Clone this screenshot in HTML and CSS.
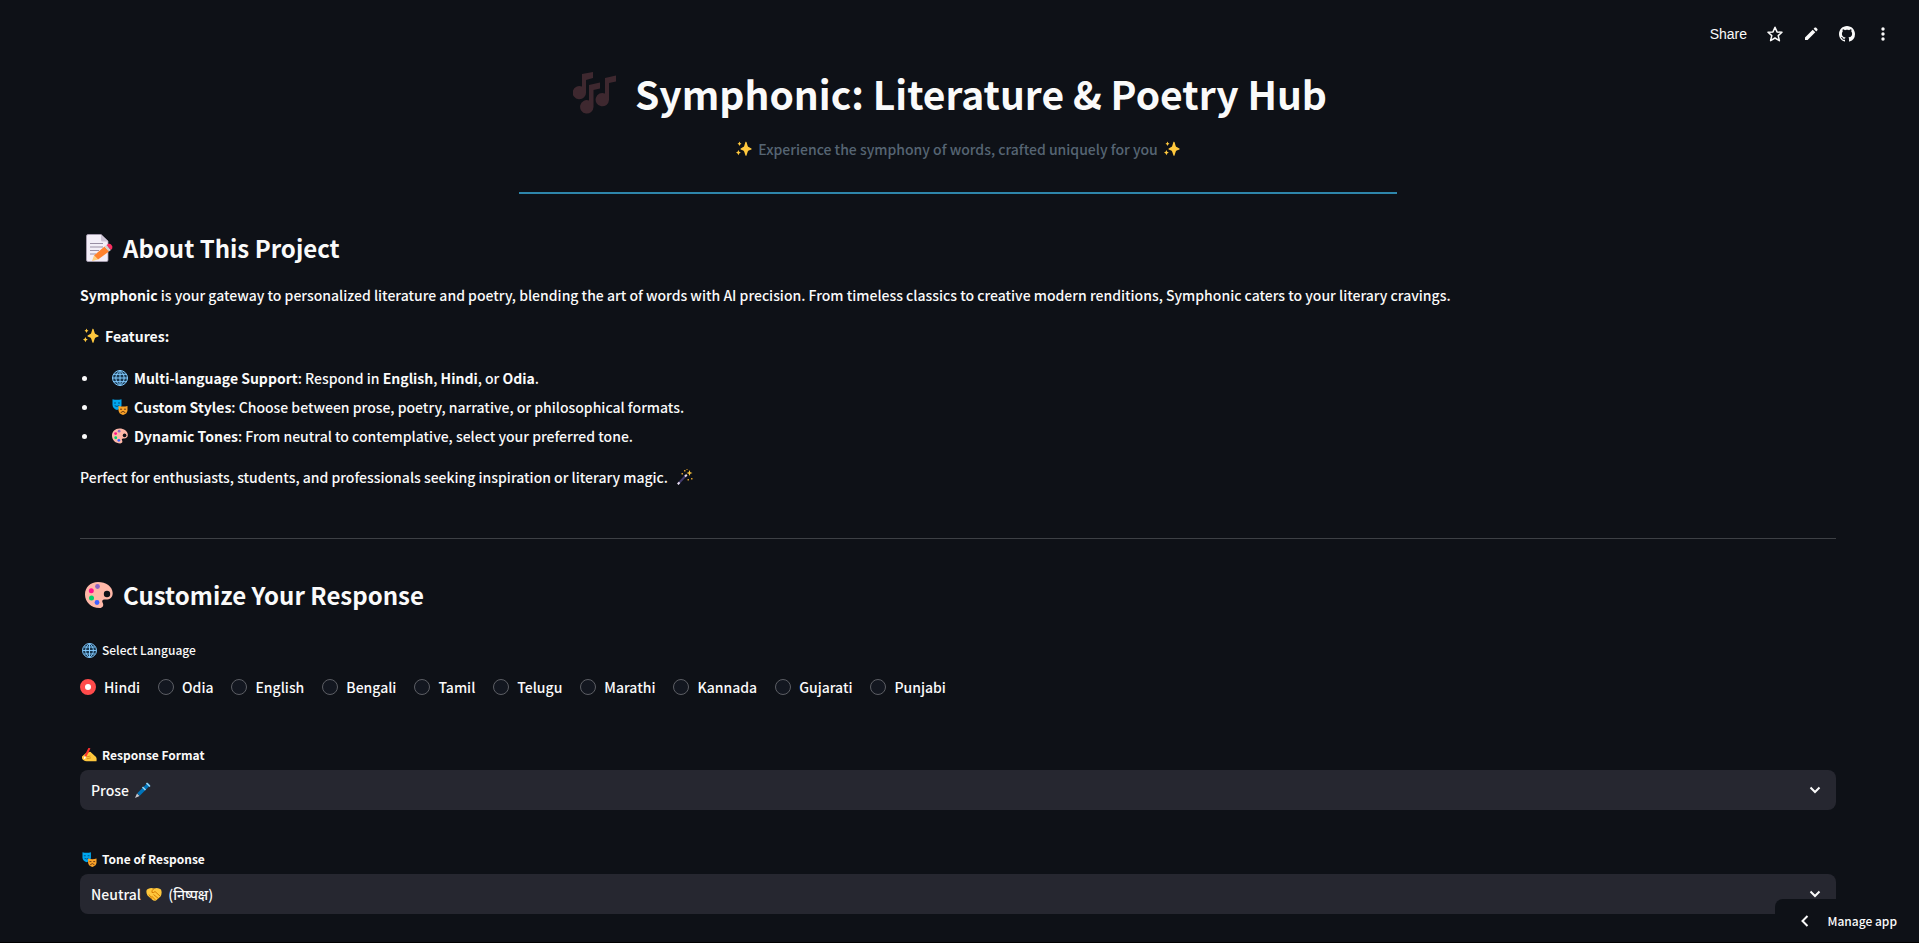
FILE: index.html
```html
<!DOCTYPE html>
<html lang="en">
<head>
	<meta charset="UTF-8">
	<meta name="viewport" content="width=device-width, initial-scale=1">
	<title>Symphonic</title>
	<link rel="stylesheet" href="styles.css">
</head>
<body>
<!-- shared icons -->
<svg class="sprite" aria-hidden="true">
	<symbol id="i-sparkles" viewBox="0 0 16 16">
		<path fill="#ffc83d" d="M9.500 .8 Q10 .4 10.500 1 L11.700 5 Q12 5.800 12.700 6.100 L15.400 7.400 Q16 8 15.400 8.500 L12.700 9.600 Q12 10 11.700 10.700 L10.500 14.600 Q10 15.200 9.500 14.600 L8.200 10.700 Q7.900 10 7.200 9.600 L4.700 8.500 Q4.100 8 4.700 7.400 L7.200 6.100 Q7.900 5.800 8.200 5 Z"/>
		<path fill="#ffc83d" d="M3.500 .6 L4.200 2.100 L5.500 2.800 L4.200 3.500 L3.500 5 L2.800 3.500 L1.500 2.800 L2.800 2.100Z M2.400 9 L3.200 10.800 L4.800 11.600 L3.200 12.400 L2.400 14.200 L1.600 12.400 L0 11.600 L1.600 10.800Z"/>
	</symbol>
	<symbol id="i-globe" viewBox="0 0 16 16">
		<circle cx="8" cy="8" r="7.500" fill="#17364f" stroke="#83cbff"/>
		<path fill="none" stroke="#83cbff" d="M8 .5V15.500M.5 8H15.500M2 4.300H14M2 11.700H14M8 .5C2.500 4.500 2.500 11.500 8 15.500M8 .5C13.500 4.500 13.500 11.500 8 15.500"/>
	</symbol>
	<symbol id="i-masks" viewBox="0 0 16 16">
		<path fill="#00a6ed" d="M.5 .2Q5 1.400 9.500 .2V6.500Q9 10 5 11Q.8 9.500 .5 6Z"/>
		<path fill="none" stroke="#004f82" d="M2 4h2M6 4h2M2.700 6.700Q5 8.300 7.200 6.500"/>
		<path fill="#f9a228" d="M6.500 7Q11 8.200 15.500 7V11.500Q15 15 11 16Q7 15 6.500 11.500Z"/>
		<path fill="none" stroke="#6d3b13" d="M8 10.200h2M12 10.200h2M8.700 13.700Q11 11 13.300 13.700"/>
	</symbol>
	<symbol id="i-palette" viewBox="0 0 28 28">
		<path fill="#ffb8a8" d="M13 1C21 1 27.500 5.500 27.700 12C27.800 17 24 19 20 18.500C17.500 18.200 16.500 20 17.800 22C19 24.500 17.800 27 14.500 27C6 27 0 21 0 13.500C0 6 5.500 1 13 1Z"/>
		<circle cx="22" cy="13" r="3.200" fill="#0e1117"/>
		<circle cx="12.500" cy="5.500" r="2.400" fill="#8d65c5"/>
		<circle cx="6.300" cy="9.800" r="2.500" fill="#ff118b"/>
		<circle cx="6.500" cy="17" r="2.500" fill="#00d26a"/>
		<circle cx="12" cy="21.500" r="2.400" fill="#3f5fff"/>
	</symbol>
	<symbol id="i-memo" viewBox="0 0 28 28">
		<path fill="#f3eef8" stroke="#a99fb5" stroke-width=".8" d="M3 .5H16L23 7V26Q23 27.500 21.500 27.500H3Q1.500 27.500 1.500 26V2Q1.500 .5 3 .5Z"/>
		<path fill="#cdc4d6" d="M16 .5L23 7.500H17.500Q16 7.500 16 6Z"/>
		<path stroke="#998ea4" d="M5 9.500H18M5 13H18M5 16.500H14M5 20H11"/>
		<path fill="#ff822d" d="M19.500 12.500L24 17.500L13 25.500L9 21.500Z"/>
		<path fill="#ffce7c" d="M9 21.500L13 25.500L7 27Z"/>
		<path fill="#d3d3d3" d="M19.500 12.500L21.500 11L26 16L24 17.500Z"/>
		<path fill="#f92f60" d="M21.500 11L23.500 9.800Q25 9.200 26.500 11L27.300 12.500Q28 14 26 16Z"/>
	</symbol>
	<symbol id="i-notes" viewBox="0 0 44 42">
		<path d="M9 2L20 0V6L13 8V20A6.700 6.700 0 1 1 9 14.500Z M16 13L27 10.500V16.500L20.500 18V35A6.700 6.700 0 1 1 16 28.500Z M32 6L43 3.500V9.500L36 11V28A6.700 6.700 0 1 1 32 21.500Z"/>
	</symbol>
	<symbol id="i-wand" viewBox="0 0 16 16">
		<path stroke="#433b6b" stroke-width="2" d="M1 15L9 6.500"/>
		<path stroke="#e6dcee" stroke-width="2" d="M.8 15.200L2.500 13.400M8 7.500L9.800 5.700"/>
		<path fill="#ffc83d" d="M12.500 1L13.300 3.200L15.500 4L13.300 4.800L12.500 7L11.700 4.800L9.500 4L11.700 3.200Z"/>
		<path fill="#d89c2a" d="M7 1h1.500v1.500H7zM4.500 4H6v1.500H4.500zM14 9h1.500v1.500H14zM10.500 10H12v1.500h-1.500zM9.500 0h1v1h-1z"/>
	</symbol>
	<symbol id="i-writing" viewBox="0 0 16 16">
		<path fill="#ffc83d" d="M0 9L4 5.500L7 4.500Q9 3.500 10 5L15 9.500Q16 11 15.500 14H5Q1 14 0 11Z"/>
		<path fill="none" stroke="#d68a18" d="M5 9.500L9 8.500M5 11.500L9.500 10.500"/>
		<path stroke="#f8312f" stroke-width="2.200" d="M8 0L3.500 9"/>
		<path stroke="#fff" stroke-width="1.500" d="M3.500 9L2.500 11.500"/>
	</symbol>
	<symbol id="i-pen" viewBox="0 0 16 16">
		<path stroke="#0074ba" stroke-width="3.500" d="M3.500 12.500L14 2"/>
		<path stroke="#9bd7f5" stroke-width="1.500" d="M11.500 1L15 4.500M7.500 5L10.500 8"/>
		<path fill="#c8c8d0" d="M2 11.500L4.500 14L0 16Z"/>
	</symbol>
	<symbol id="i-handshake" viewBox="0 0 16 16">
		<path fill="#ffc83d" d="M1 3.500Q4 1 8 2.500Q12 1 15 3.500Q16.500 7 14.500 10.500L10 14.500Q8 15.500 6 13.500L1.500 9.500Q-.5 6 1 3.500Z"/>
		<path fill="none" stroke="#d67d00" d="M8 2.500Q5 5 6 6.500Q8 7 9 5.500L14 10M7.500 8.500L12 12.200M5.500 10L9.500 14M3 8.500L6 13"/>
	</symbol>
	<symbol id="i-chevron" viewBox="0 0 12 8">
		<path fill="none" stroke="currentColor" stroke-width="2" d="M1.500 1.500L6 6L10.500 1.500"/>
	</symbol>
</svg>

<header class="toolbar">
	<button type="button">Share</button>
	<button type="button" aria-label="Favorite">
		<svg viewBox="0 0 16 16"><path fill="none" stroke="currentColor" stroke-width="1.500" stroke-linejoin="round" d="M8 1.200L10 5.900L15 6.300L11.200 9.600L12.400 14.700L8 12L3.600 14.700L4.800 9.600L1 6.300L6 5.900Z"/></svg>
	</button>
	<button type="button" aria-label="Edit">
		<svg viewBox="0 0 16 16"><path fill="currentColor" d="M2 11.400L9.700 3.700L12.300 6.300L4.600 14H2ZM10.600 2.800L11.800 1.600Q12.400 1.200 13 1.600L14.400 3Q14.800 3.600 14.400 4.200L13.200 5.400Z"/></svg>
	</button>
	<button type="button" aria-label="View source">
		<svg viewBox="0 0 16 16"><path fill="currentColor" d="M8 0C3.580 0 0 3.580 0 8c0 3.540 2.290 6.530 5.470 7.590.4.070.55-.17.55-.38 0-.19-.01-.82-.01-1.490-2.010.37-2.530-.49-2.690-.94-.09-.23-.48-.94-.82-1.130-.28-.15-.68-.52-.01-.53.63-.01 1.080.58 1.230.82.72 1.210 1.870.87 2.330.66.070-.52.280-.87.510-1.070-1.780-.2-3.640-.89-3.640-3.950 0-.87.31-1.590.82-2.150-.08-.2-.36-1.020.08-2.120 0 0 .67-.21 2.200.82.64-.18 1.320-.27 2-.27s1.360.09 2 .27c1.530-1.040 2.200-.82 2.200-.82.44 1.100.16 1.920.08 2.120.51.56.82 1.270.82 2.150 0 3.070-1.870 3.750-3.650 3.950.29.25.54.73.54 1.480 0 1.070-.01 1.930-.01 2.200 0 .21.15.46.55.38A8.010 8.010 0 0 0 16 8c0-4.420-3.580-8-8-8Z"/></svg>
	</button>
	<button type="button" aria-label="Menu">
		<svg viewBox="0 0 16 16"><g fill="currentColor"><circle cx="8" cy="3" r="1.700"/><circle cx="8" cy="8" r="1.700"/><circle cx="8" cy="13" r="1.700"/></g></svg>
	</button>
</header>

<main class="page">
	<h1><svg class="notes"><use href="#i-notes"/></svg>Symphonic: Literature &amp; Poetry Hub</h1>
	<p class="tagline"><svg class="icon"><use href="#i-sparkles"/></svg>Experience the symphony of words, crafted uniquely for you<svg class="icon"><use href="#i-sparkles"/></svg></p>
	<hr class="accent">

	<section class="about">
		<h2><svg><use href="#i-memo"/></svg>About This Project</h2>
		<p><strong>Symphonic</strong> is your gateway to personalized literature and poetry, blending the art of words with AI precision. From timeless classics to creative modern renditions, Symphonic caters to your literary cravings.</p>
		<p class="line"><svg class="icon"><use href="#i-sparkles"/></svg><strong>Features:</strong></p>
		<ul>
			<li><svg class="icon"><use href="#i-globe"/></svg><span><strong>Multi-language Support</strong>: Respond in <strong>English</strong>, <strong>Hindi</strong>, or <strong>Odia</strong>.</span></li>
			<li><svg class="icon"><use href="#i-masks"/></svg><span><strong>Custom Styles</strong>: Choose between prose, poetry, narrative, or philosophical formats.</span></li>
			<li><svg class="icon"><use href="#i-palette"/></svg><span><strong>Dynamic Tones</strong>: From neutral to contemplative, select your preferred tone.</span></li>
		</ul>
		<p class="line">Perfect for enthusiasts, students, and professionals seeking inspiration or literary magic.<svg class="icon"><use href="#i-wand"/></svg></p>
	</section>

	<hr>

	<form class="options">
		<h2><svg><use href="#i-palette"/></svg>Customize Your Response</h2>
		<fieldset>
			<legend class="caption"><svg class="icon"><use href="#i-globe"/></svg>Select Language</legend>
			<div class="radios">
				<label><input type="radio" name="language" checked>Hindi</label>
				<label><input type="radio" name="language">Odia</label>
				<label><input type="radio" name="language">English</label>
				<label><input type="radio" name="language">Bengali</label>
				<label><input type="radio" name="language">Tamil</label>
				<label><input type="radio" name="language">Telugu</label>
				<label><input type="radio" name="language">Marathi</label>
				<label><input type="radio" name="language">Kannada</label>
				<label><input type="radio" name="language">Gujarati</label>
				<label><input type="radio" name="language">Punjabi</label>
			</div>
		</fieldset>
		<div class="field">
			<label class="caption" for="format"><svg class="icon"><use href="#i-writing"/></svg><strong>Response Format</strong></label>
			<div class="select">
				<select id="format"><option>Prose</option></select>
				<svg class="icon pen"><use href="#i-pen"/></svg>
				<svg class="arrow"><use href="#i-chevron"/></svg>
			</div>
		</div>
		<div class="field">
			<label class="caption" for="tone"><svg class="icon"><use href="#i-masks"/></svg><strong>Tone of Response</strong></label>
			<div class="select">
				<select id="tone"><option>Neutral&emsp;&ensp;&nbsp;&nbsp;(निष्पक्ष)</option></select>
				<svg class="icon handshake"><use href="#i-handshake"/></svg>
				<svg class="arrow"><use href="#i-chevron"/></svg>
			</div>
		</div>
	</form>
</main>

<button type="button" class="manage"><svg viewBox="0 0 8 12"><path fill="none" stroke="currentColor" stroke-width="2" d="M6.500 1L1.500 6L6.500 11"/></svg>Manage app</button>
</body>
</html>
```
FILE: styles.css
```css
* {
	box-sizing: border-box;
}
html {
	height: 100%;
	overflow: hidden;
}
body {
	height: 100%;
	margin: 0;
	overflow: hidden;
	border-bottom: 1px solid #000;
	background: #0e1117;
	color: #fafafa;
	font-family: "Source Sans Pro", "Noto Sans CJK SC", "Noto Sans", sans-serif;
	font-size: 14px;
	font-weight: 500;
	line-height: 24px;
}
button, select {
	border: 0;
	color: inherit;
	font: inherit;
}
h1, h2, p, ul, fieldset {
	margin: 0;
	padding: 0;
}
svg {
	display: block;
	flex: none;
}
.sprite {
	position: absolute;
	width: 0;
	height: 0;
}
.icon {
	width: 16px;
	height: 16px;
}

.toolbar {
	position: absolute;
	top: 22px;
	right: 28px;
	display: flex;
	gap: 20px;
}
.toolbar button {
	display: flex;
	align-items: center;
	padding: 0;
	background: none;
	font-family: "Liberation Sans", sans-serif;
}
.toolbar svg {
	width: 16px;
	height: 16px;
}

.page {
	padding: 67px 83px 0 80px;
}
h1 {
	display: flex;
	align-items: center;
	justify-content: center;
	gap: 18px;
	padding-right: 16px;
	font-size: 39px;
	line-height: 52px;
}
.notes {
	width: 44px;
	height: 42px;
	fill: #3e282f;
}
.tagline {
	display: flex;
	align-items: center;
	justify-content: center;
	gap: 6px;
	margin-top: 18px;
	color: #566573;
}
hr {
	height: 1px;
	margin: 0;
	border: 0;
	background: #3d4045;
}
.accent {
	width: 50%;
	height: 2px;
	margin: 31px auto 37px;
	background: #2e86ab;
}

h2 {
	display: flex;
	align-items: center;
	gap: 10px;
	padding-left: 5px;
	font-size: 24px;
	line-height: 34px;
}
h2 svg {
	width: 28px;
	height: 28px;
}
.about {
	margin-bottom: 49px;
}
.about p {
	margin-top: 17px;
}
.about h2 + p {
	margin-top: 18px;
}
.line {
	display: flex;
	align-items: center;
	gap: 6px;
}
.line .icon:first-child {
	margin-left: 3px;
}
.about ul {
	display: grid;
	gap: 5px;
	margin-top: 18px;
	list-style: none;
}
li {
	display: flex;
	align-items: center;
	gap: 6px;
}
li::before {
	content: "";
	width: 5px;
	height: 5px;
	margin: 0 19px 0 2px;
	border-radius: 50%;
	background: #fafafa;
}

.options {
	padding-top: 39px;
}
fieldset {
	min-width: 0;
	margin-top: 26px;
	border: 0;
}
.caption {
	display: flex;
	align-items: center;
	gap: 5px;
	padding: 0 0 0 2px;
	font-size: 12px;
}
.caption .icon {
	width: 15px;
	height: 15px;
}
.radios {
	display: flex;
	flex-wrap: wrap;
	gap: 18px;
	margin-top: 13px;
}
.radios label {
	display: flex;
	align-items: center;
	gap: 8px;
}
.radios input {
	appearance: none;
	width: 16px;
	height: 16px;
	margin: 0;
	border: 1px solid #5c5e64;
	border-radius: 50%;
	background: #131720;
}
.radios input:checked {
	border: 5px solid #ff4b4b;
	background: #fff;
}
.field {
	margin-top: 37px;
}
fieldset + .field {
	margin-top: 44px;
}
.select {
	position: relative;
	margin-top: 3px;
}
.select select {
	display: block;
	appearance: none;
	width: 100%;
	height: 40px;
	padding: 0 40px 0 11px;
	border-radius: 8px;
	background: #262730;
}
.select svg {
	position: absolute;
	top: 12px;
	pointer-events: none;
}
.pen {
	left: 55px;
}
.handshake {
	left: 66px;
}
.select .arrow {
	top: 16px;
	right: 15px;
	width: 12px;
	height: 8px;
}

.manage {
	position: fixed;
	right: 0;
	bottom: 1px;
	display: flex;
	align-items: center;
	gap: 19px;
	height: 43px;
	padding: 0 22px 0 26px;
	border-top-left-radius: 8px;
	background: #0e1117;
	font-size: 12px;
}
.manage svg {
	width: 8px;
	height: 12px;
}
```
